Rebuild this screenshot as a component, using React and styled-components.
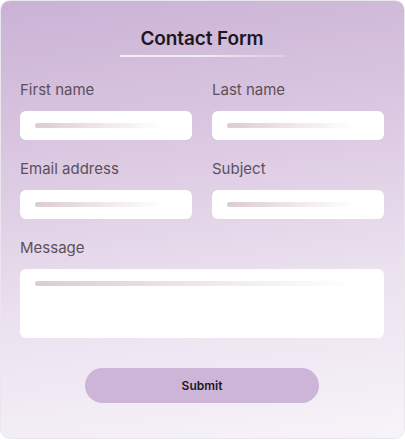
import React from 'react'
import styled, { createGlobalStyle } from 'styled-components'

const Global = createGlobalStyle`
  html, body { margin: 0; padding: 0; background: #ffffff; }
  body { font-family: Inter, "Noto Sans", sans-serif; }
`

const Card = styled.div`
  box-sizing: border-box;
  width: 405px;
  height: 439px;
  padding: 26px 20px 0 19px;
  border-radius: 10px;
  border: 1px solid #ebe6ee;
  background: linear-gradient(172deg, #cab2d5 0%, #dcc9e2 35%, #ebe1ef 65%, #f7f4f9 100%);
  display: flex;
  flex-direction: column;
`

const Title = styled.h1`
  margin: 0;
  font-size: 19px;
  line-height: 24px;
  font-weight: 600;
  color: #1d1720;
  text-align: center;
  letter-spacing: -0.1px;
`

const Rule = styled.div`
  align-self: center;
  width: 165px;
  height: 2px;
  margin-top: 4px;
  background: linear-gradient(90deg, rgba(255,255,255,0.75), rgba(255,255,255,0.7) 50%, rgba(255,255,255,0.2));
`

const Grid = styled.div`
  display: grid;
  grid-template-columns: 1fr 1fr;
  column-gap: 20px;
  row-gap: 20px;
  margin-top: 24px;
`

const Field = styled.div`
  display: flex;
  flex-direction: column;
  gap: 12px;
  grid-column: ${p => (p.$wide ? '1 / -1' : 'auto')};
`

const Label = styled.label`
  font-size: 15px;
  line-height: 18px;
  color: #5b505c;
`

const Input = styled.div`
  box-sizing: border-box;
  height: ${p => (p.$tall ? '69px' : '29px')};
  border-radius: 6px;
  background: #ffffff;
  padding: 12px 15px;
`

const Placeholder = styled.div`
  height: 5px;
  width: ${p => (p.$wide ? '96%' : '90%')};
  border-radius: 3px;
  background: linear-gradient(90deg, #dccbd2 0%, #ece3e8 45%, #ffffff 100%);
`

const Actions = styled.div`
  display: flex;
  justify-content: center;
  margin-top: 30px;
`

const Button = styled.button`
  width: 234px;
  height: 35px;
  border: none;
  border-radius: 18px;
  background: #ccb5d7;
  color: #1d1720;
  font-family: Inter, "Noto Sans", sans-serif;
  font-size: 12px;
  font-weight: 600;
  cursor: pointer;
`

const fields = [
  { label: 'First name' },
  { label: 'Last name' },
  { label: 'Email address' },
  { label: 'Subject' },
  { label: 'Message', wide: true },
]

export default function App() {
  return (
    <>
      <Global />
      <Card>
        <Title>Contact Form</Title>
        <Rule />
        <Grid>
          {fields.map(f => (
            <Field key={f.label} $wide={f.wide}>
              <Label>{f.label}</Label>
              <Input $tall={f.wide}>
                <Placeholder $wide={f.wide} />
              </Input>
            </Field>
          ))}
        </Grid>
        <Actions>
          <Button>Submit</Button>
        </Actions>
      </Card>
    </>
  )
}
